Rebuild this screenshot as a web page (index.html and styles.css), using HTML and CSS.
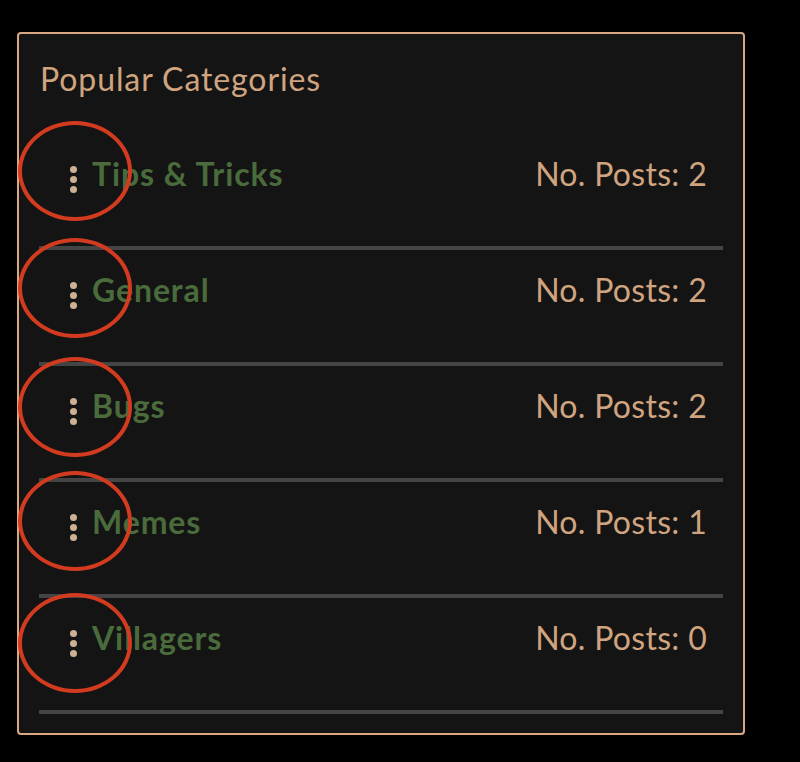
FILE: index.html
```html
<!DOCTYPE html>
<html lang="en">
<head>
<meta charset="utf-8">
<title>Popular Categories</title>
<link rel="stylesheet" href="styles.css">
</head>
<body>
<div class="page">
  <section class="card">
    <h2 class="card-title">Popular Categories</h2>
    <ul class="cat-list">
      <li class="cat-row">
        <span class="mark"></span>
        <span class="more"><i></i><i></i><i></i></span>
        <a class="cat-name" href="#">Tips &amp; Tricks</a>
        <span class="cat-count">No. Posts: 2</span>
      </li>
      <li class="cat-row">
        <span class="mark"></span>
        <span class="more"><i></i><i></i><i></i></span>
        <a class="cat-name" href="#">General</a>
        <span class="cat-count">No. Posts: 2</span>
      </li>
      <li class="cat-row">
        <span class="mark"></span>
        <span class="more"><i></i><i></i><i></i></span>
        <a class="cat-name" href="#">Bugs</a>
        <span class="cat-count">No. Posts: 2</span>
      </li>
      <li class="cat-row">
        <span class="mark"></span>
        <span class="more"><i></i><i></i><i></i></span>
        <a class="cat-name" href="#">Memes</a>
        <span class="cat-count">No. Posts: 1</span>
      </li>
      <li class="cat-row">
        <span class="mark"></span>
        <span class="more"><i></i><i></i><i></i></span>
        <a class="cat-name" href="#">Villagers</a>
        <span class="cat-count">No. Posts: 0</span>
      </li>
    </ul>
  </section>
</div>
</body>
</html>
```

FILE: styles.css
```css
* { box-sizing: border-box; }

html, body {
  margin: 0;
  padding: 0;
  background: #000;
}

body {
  font-family: Lato, "Open Sans", "Noto Sans", sans-serif;
}

.page {
  padding: 32px 0 0 17px;
}

.card {
  width: 728px;
  height: 703px;
  background: #141414;
  border: 2px solid #d9a882;
  border-radius: 4px;
  padding: 25px 20px 19px;
}

.card-title {
  margin: 0;
  padding-bottom: 35px;
  font-size: 32px;
  font-weight: 400;
  line-height: 40px;
  letter-spacing: 0.9px;
  color: #d0a47f;
  padding-left: 1px;
}

.cat-list {
  list-style: none;
  margin: 0;
  padding: 0;
}

.cat-row {
  position: relative;
  display: flex;
  align-items: flex-start;
  padding: 20px 17px 52px 30px;
  border-bottom: 4px solid #444444;
  font-size: 32px;
  line-height: 40px;
}

.more {
  display: flex;
  flex-direction: column;
  gap: 3px;
  width: 8px;
  margin-top: 12px;
  align-items: center;
}

.more i {
  display: block;
  width: 7px;
  height: 7px;
  border-radius: 50%;
  background: #cdb195;
}

.cat-name {
  margin-left: 15px;
  color: #4a6b3b;
  font-weight: 700;
  letter-spacing: 0.9px;
  text-decoration: none;
}

.cat-count {
  margin-left: auto;
  margin-right: -1px;
  letter-spacing: 0.3px;
  color: #d0a47f;
}

.mark {
  position: absolute;
  left: -21px;
  top: -12px;
  width: 114px;
  height: 100px;
  border: 4px solid #d23b1f;
  border-radius: 50%;
  pointer-events: none;
}

.cat-row:nth-child(1) .mark { top: -13px; }
.cat-row:nth-child(2) .mark { top: -12px; }
.cat-row:nth-child(3) .mark { top: -9px; }
.cat-row:nth-child(4) .mark { top: -11px; }
.cat-row:nth-child(5) .mark { top: -5px; }
```
